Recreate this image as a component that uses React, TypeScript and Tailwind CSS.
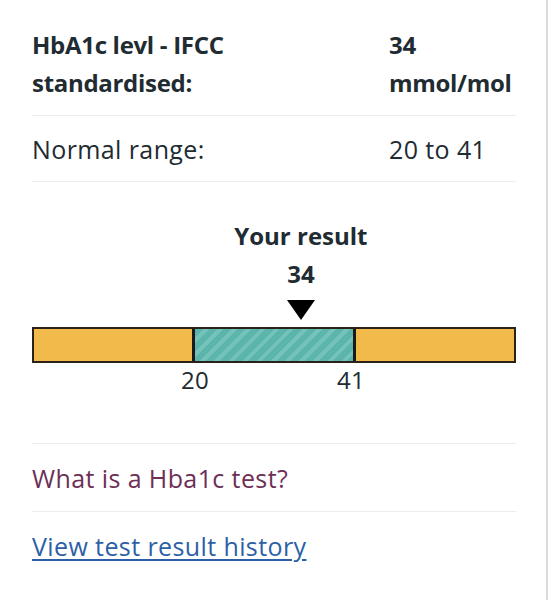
import React from "react";

const low = 20;
const high = 41;
const value = 34;

export default function App() {
  const markerPct = ((1 + (value - low) / (high - low)) / 3) * 100;
  return (
    <div
      className="w-[548px] h-[600px] bg-white border-r-2 border-[#dcdcdc] pl-8 pr-[30px] text-[#212b32] text-[24px] leading-[38px]"
      style={{ fontFamily: '"Open Sans", "Noto Sans", Arial, sans-serif' }}
    >
      <div className="flex pt-[26px] pb-[13px] border-b border-[#ececec] font-bold tracking-[-0.3px]">
        <div className="w-[357px]">
          HbA1c levl - IFCC
          <br />
          standardised:
        </div>
        <div>
          34
          <br />
          mmol/mol
        </div>
      </div>
      <div className="flex pt-[14px] pb-[13px] border-b border-[#ececec] text-[25px] tracking-[0.4px]">
        <div className="w-[357px]">Normal range:</div>
        <div>20 to 41</div>
      </div>

      <div className="pt-[35px] pb-[49px] border-b border-[#ececec] w-[484px]">
        <div
          className="w-0 flex flex-col items-center"
          style={{ marginLeft: `${markerPct}%` }}
        >
          <div className="font-bold whitespace-nowrap">Your result</div>
          <div className="font-bold whitespace-nowrap">{value}</div>
          <svg width="28" height="20" viewBox="0 0 28 20" className="mt-[7px] shrink-0">
            <polygon points="0,0 28,0 14,20" fill="#000" />
          </svg>
        </div>
        <div className="mt-[7px] flex h-[36px] border-2 border-[#2a2118]">
          <div className="flex-1 bg-[#f2b94b]" />
          <div className="flex-1 border-x-[3px] border-[#1a1a1a] bg-[repeating-linear-gradient(135deg,#5cb5ac_0px,#5cb5ac_6px,#74c3bb_6px,#74c3bb_10px)]" />
          <div className="flex-1 bg-[#f2b94b]" />
        </div>
        <div className="relative h-[28px] mt-[3px] leading-[28px] tracking-[0.3px]">
          <div className="absolute top-0 left-[33.7%] -translate-x-1/2">20</div>
          <div className="absolute top-0 left-[65.9%] -translate-x-1/2">41</div>
        </div>
      </div>

      <div className="pt-[15px] pb-[14px] border-b border-[#ececec] text-[#6d2f55] text-[25px] tracking-[0.4px]">
        What is a Hba1c test?
      </div>
      <div className="pt-[15px] text-[25px] tracking-[0.4px]">
        <span className="text-[#2d5fa6] underline decoration-[2px] underline-offset-[3px]">
          View test result history
        </span>
      </div>
    </div>
  );
}
